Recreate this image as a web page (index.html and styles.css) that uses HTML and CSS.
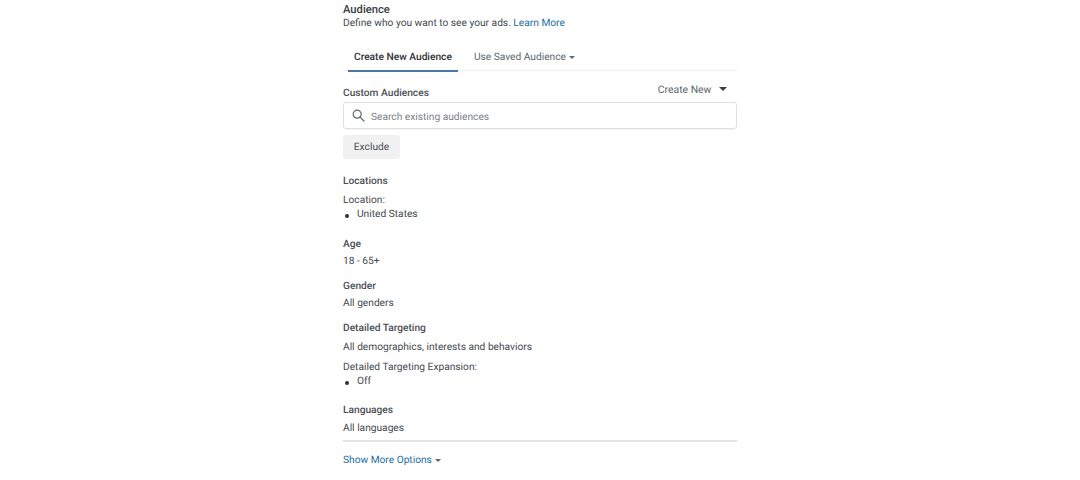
FILE: index.html
```html
<!DOCTYPE html>
<html lang="en">
<head>
    <meta charset="UTF-8">
    <meta name="viewport" content="width=device-width, initial-scale=1.0">
    <title>Audience</title>
    <link rel="stylesheet" href="styles.css">
</head>
<body>
    <div class="container">
        <h2 class="title">Audience</h2>
        <p class="intro">Define who you want to see your ads. <a class="link">Learn More</a></p>

        <div class="tabs">
            <div class="tab active">Create New Audience</div>
            <div class="tab">Use Saved Audience <span class="caret small"></span></div>
        </div>

        <div class="custom-head">
            <h3 class="label custom-label">Custom Audiences</h3>
            <div class="create-new">Create New <span class="caret"></span></div>
        </div>
        <div class="search">
            <svg class="search-icon" width="13" height="13" viewBox="0 0 13 13" fill="none" stroke="#606770" stroke-width="1.2">
                <circle cx="5.2" cy="5.2" r="4"/>
                <path d="M8.1 8.1 L12 12" stroke-linecap="round"/>
            </svg>
            <span class="placeholder">Search existing audiences</span>
        </div>
        <button class="exclude-btn">Exclude</button>

        <section class="locations">
            <h3 class="label">Locations</h3>
            <p class="value location-name">Location:</p>
            <ul class="bullets"><li>United States</li></ul>
        </section>

        <section class="age">
            <h3 class="label">Age</h3>
            <p class="value">18 - 65+</p>
        </section>

        <section class="gender">
            <h3 class="label">Gender</h3>
            <p class="value">All genders</p>
        </section>

        <section class="targeting">
            <h3 class="label">Detailed Targeting</h3>
            <p class="value demo">All demographics, interests and behaviors</p>
            <p class="value expansion">Detailed Targeting Expansion:</p>
            <ul class="bullets"><li>Off</li></ul>
        </section>

        <section class="languages">
            <h3 class="label">Languages</h3>
            <p class="value">All languages</p>
        </section>

        <div class="more">
            <a class="link">Show More Options</a> <span class="caret small"></span>
        </div>
    </div>
</body>
</html>
```

FILE: styles.css
```css
body {
    font-family: Roboto, Arial, sans-serif;
    font-size: 10.2px;
    line-height: 14px;
    text-rendering: geometricPrecision;
    margin: 0;
    padding: 0;
    background-color: #fff;
    color: #444950;
}
.container {
    width: 394px;
    margin-left: 343px;
    padding-top: 3px;
}
.title {
    margin: 0;
    font-size: 11.2px;
    line-height: 14px;
    font-weight: 500;
    color: #3a3d42;
}
.intro {
    margin: 0;
}
.link {
    color: #1a6fa8;
}
.tabs {
    display: flex;
    margin-top: 11px;
    height: 28px;
    border-bottom: 1px solid #eeeff1;
}
.tab {
    padding: 9px 5px 0 5px;
    margin-right: 11px;
    color: #606770;
}
.tab.active {
    margin-left: 5px;
    padding: 9px 6px 0 6px;
    font-weight: 500;
    color: #2f3237;
    height: 19px;
    border-bottom: 2px solid #4a76a8;
}
.caret {
    display: inline-block;
    width: 0;
    height: 0;
    margin-left: 5px;
    vertical-align: 2px;
    border-left: 4px solid transparent;
    border-right: 4px solid transparent;
    border-top: 4px solid #3a3d42;
}
.caret.small {
    margin-left: 1px;
    vertical-align: 1px;
    border-left-width: 3px;
    border-right-width: 3px;
    border-top: 3px solid #606770;
}
.custom-head {
    display: flex;
    justify-content: space-between;
    height: 31px;
}
.create-new {
    margin-top: 12px;
    margin-right: 10px;
    font-size: 10.4px;
    color: #606770;
}
.label {
    margin: 0;
    font-size: 10.2px;
    line-height: 14px;
    font-weight: 500;
    color: #4b4f56;
}
.custom-label {
    margin-top: 16px;
}
.value {
    margin: 0;
}
.search {
    display: flex;
    align-items: center;
    height: 25px;
    border: 1px solid #dddfe2;
    border-radius: 3px;
    padding-left: 8px;
    box-shadow: 0 1px 1px rgba(0, 0, 0, 0.04);
}
.search-icon {
    margin-right: 6px;
}
.placeholder {
    color: #7b8087;
    margin-top: 4px;
}
.exclude-btn {
    display: block;
    margin-top: 6px;
    width: 57px;
    height: 24px;
    padding: 0;
    border: none;
    border-radius: 3px;
    background: #f1f1f2;
    color: #4b4f56;
    font-family: inherit;
    font-size: 10.2px;
    text-rendering: inherit;
}
.bullets {
    margin: 0;
    padding: 0;
    list-style: none;
}
.bullets li {
    display: flex;
    align-items: center;
}
.bullets li::before {
    content: "";
    width: 4px;
    height: 4px;
    margin: 1px 8px 0 2px;
    border-radius: 50%;
    background: #2f3237;
}
.locations {
    margin-top: 16px;
}
.location-name {
    margin-top: 5px;
}
.age {
    margin-top: 16px;
}
.age .value, .gender .value {
    margin-top: 3px;
}
.gender {
    margin-top: 11px;
}
.targeting {
    margin-top: 11px;
}
.demo {
    margin-top: 5px;
}
.expansion {
    margin-top: 6px;
}
.languages {
    margin-top: 15px;
    padding-bottom: 4px;
    border-bottom: 2px solid #e3e4e6;
}
.languages .value {
    margin-top: 4px;
}
.more {
    margin-top: 12px;
}
```
